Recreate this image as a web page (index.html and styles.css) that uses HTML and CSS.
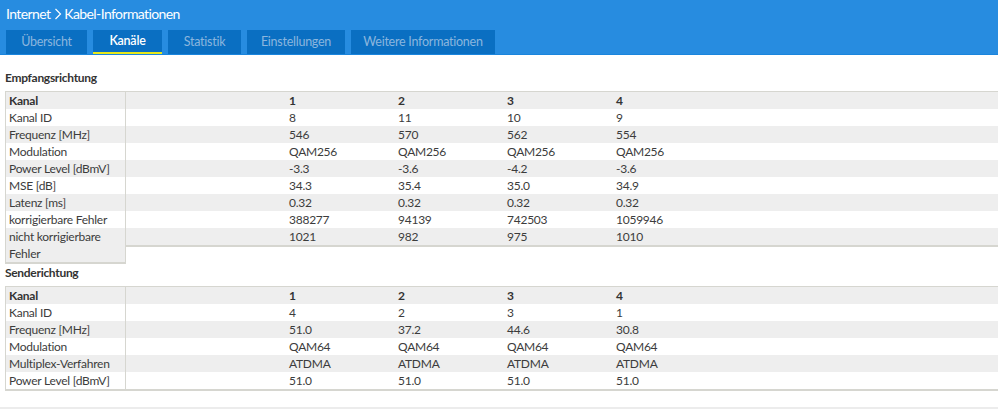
FILE: index.html
```html
<!DOCTYPE html>
<html lang="de">

<head>
  <meta charset="UTF-8" />
  <meta name="viewport" content="width=device-width, initial-scale=1.0" />
  <title>Kabel-Informationen</title>
  <link rel="stylesheet" href="styles.css">
</head>

<body>
  <header class="topbar">
    <p class="breadcrumb">Internet
      <svg class="sep" width="8" height="12" viewBox="0 0 8 12"><path d="M1.5 1 L6.5 6 L1.5 11" fill="none" stroke="#fff" stroke-width="1.2"/></svg>
      Kabel-Informationen</p>
    <nav class="tabs">
      <a class="tab" style="width: 81px">Übersicht</a>
      <a class="tab active" style="width: 69px">Kanäle</a>
      <a class="tab" style="width: 73px">Statistik</a>
      <a class="tab" style="width: 98px">Einstellungen</a>
      <a class="tab" style="width: 144px">Weitere Informationen</a>
    </nav>
  </header>

  <main class="content">
    <h2 class="section-title">Empfangsrichtung</h2>
    <div class="split">
      <table class="labels">
        <tr class="head"><td>Kanal</td></tr>
        <tr><td>Kanal ID</td></tr>
        <tr><td>Frequenz [MHz]</td></tr>
        <tr><td>Modulation</td></tr>
        <tr><td>Power Level [dBmV]</td></tr>
        <tr><td>MSE [dB]</td></tr>
        <tr><td>Latenz [ms]</td></tr>
        <tr><td>korrigierbare Fehler</td></tr>
        <tr><td>nicht korrigierbare Fehler</td></tr>
      </table>
      <table class="values">
        <colgroup>
          <col class="first"><col class="col"><col class="col"><col class="col"><col>
        </colgroup>
        <tr class="head"><td>1</td><td>2</td><td>3</td><td>4</td><td></td></tr>
        <tr><td>8</td><td>11</td><td>10</td><td>9</td><td></td></tr>
        <tr><td>546</td><td>570</td><td>562</td><td>554</td><td></td></tr>
        <tr><td>QAM256</td><td>QAM256</td><td>QAM256</td><td>QAM256</td><td></td></tr>
        <tr><td>-3.3</td><td>-3.6</td><td>-4.2</td><td>-3.6</td><td></td></tr>
        <tr><td>34.3</td><td>35.4</td><td>35.0</td><td>34.9</td><td></td></tr>
        <tr><td>0.32</td><td>0.32</td><td>0.32</td><td>0.32</td><td></td></tr>
        <tr><td>388277</td><td>94139</td><td>742503</td><td>1059946</td><td></td></tr>
        <tr><td>1021</td><td>982</td><td>975</td><td>1010</td><td></td></tr>
      </table>
    </div>

    <h2 class="section-title second">Senderichtung</h2>
    <div class="split">
      <table class="labels">
        <tr class="head"><td>Kanal</td></tr>
        <tr><td>Kanal ID</td></tr>
        <tr><td>Frequenz [MHz]</td></tr>
        <tr><td>Modulation</td></tr>
        <tr><td>Multiplex-Verfahren</td></tr>
        <tr><td>Power Level [dBmV]</td></tr>
      </table>
      <table class="values">
        <colgroup>
          <col class="first"><col class="col"><col class="col"><col class="col"><col>
        </colgroup>
        <tr class="head"><td>1</td><td>2</td><td>3</td><td>4</td><td></td></tr>
        <tr><td>4</td><td>2</td><td>3</td><td>1</td><td></td></tr>
        <tr><td>51.0</td><td>37.2</td><td>44.6</td><td>30.8</td><td></td></tr>
        <tr><td>QAM64</td><td>QAM64</td><td>QAM64</td><td>QAM64</td><td></td></tr>
        <tr><td>ATDMA</td><td>ATDMA</td><td>ATDMA</td><td>ATDMA</td><td></td></tr>
        <tr><td>51.0</td><td>51.0</td><td>51.0</td><td>51.0</td><td></td></tr>
      </table>
    </div>
  </main>
  <div class="footer-line"></div>
</body>

</html>
```

FILE: styles.css
```css
body {
  margin: 0;
  font-family: Lato, "Open Sans", sans-serif;
  font-size: 12px;
  letter-spacing: -0.25px;
  color: #3c3c3c;
  background: #fff;
}

.topbar {
  background-color: #278ce0;
  height: 54px;
  border-bottom: 1px solid #1a85dd;
  padding: 0 6px;
}

.breadcrumb {
  margin: 0;
  padding-top: 5px;
  height: 25px;
  font-size: 14px;
  letter-spacing: -0.6px;
  color: #fff;
}

.sep {
  vertical-align: -1px;
  margin: 0 -1px 0 1px;
}

.tabs {
  display: flex;
  gap: 6px;
}

.tab {
  display: block;
  box-sizing: border-box;
  height: 24px;
  line-height: 24px;
  text-align: center;
  background-color: #0a6fc2;
  color: #8ab6de;
  font-size: 12.5px;
}

.tab.active {
  color: #fff;
  font-weight: 600;
  border-bottom: 2px solid #e8e81a;
  line-height: 22px;
}

.content {
  padding: 0 0 0 5px;
}

.section-title {
  margin: 0;
  padding: 15px 0 0;
  height: 21px;
  font-size: 12px;
  letter-spacing: -0.3px;
  font-weight: 700;
  color: #333;
}

.section-title.second {
  padding-top: 1px;
  height: 21px;
}

.split {
  display: flex;
  align-items: flex-start;
}

table {
  border-collapse: collapse;
}

td {
  padding: 0 3px;
  height: 17px;
  line-height: 17px;
  white-space: nowrap;
  vertical-align: top;
}

tr:nth-child(odd) td {
  background-color: #eeeeee;
}

tr.head td {
  font-weight: 700;
  color: #333;
}

.labels {
  width: 121px;
  border: 1px solid #d6d6d0;
  border-bottom-width: 2px;
}

.labels td {
  white-space: normal;
  width: 115px;
}

.values {
  flex: 1;
  border-top: 1px solid #d6d6d0;
  border-bottom: 2px solid #d6d6d0;
}

.values td:first-child {
  padding-left: 163px;
}

.values .first {
  width: 269px;
}

.values .col {
  width: 109px;
}

.footer-line {
  margin-top: 16px;
  border-top: 2px solid #ececec;
}
```
